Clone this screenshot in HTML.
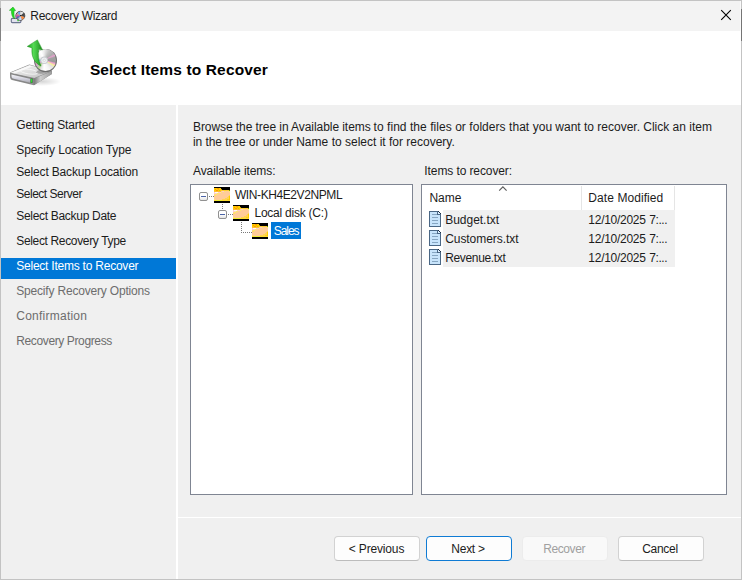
<!DOCTYPE html>
<html><head><meta charset="utf-8">
<style>
*{margin:0;padding:0;box-sizing:border-box}
html,body{width:742px;height:580px;overflow:hidden;background:#f0f0f0}
body{font-family:"Liberation Sans",sans-serif;font-size:12px;color:#000;position:relative}
.a{position:absolute}
.t{position:absolute;white-space:nowrap}
.panel{position:absolute;background:#fff;border:1px solid #7f8592}
.btn{position:absolute;top:536px;width:86px;height:25px;background:#fdfdfd;border:1px solid #d2d2d2;border-bottom-color:#bcbcbc;border-radius:4px}
.fi{position:absolute;left:429px;width:12px;height:16px}
.fo{position:absolute;width:16px;height:16px}
.xb{position:absolute;width:9px;height:9px;border:1px solid #919191;border-radius:2px;background:linear-gradient(#fff 0%,#fff 50%,#e4e4e4 100%)}
.xb i{position:absolute;left:1px;top:3px;width:5px;height:1px;background:#4b63a7}
</style></head><body>
<!-- window frame -->
<div class="a" style="left:0;top:0;width:742px;height:580px;background:#c3c3c3"></div>
<div class="a" style="left:741px;top:9px;width:1px;height:32px;background:#757575"></div>
<div class="a" style="left:0;top:8px;width:1px;height:33px;background:#838383"></div>
<div class="a" style="left:1px;top:1px;width:740px;height:30px;background:#f3f3f3"></div>
<div class="a" style="left:1px;top:31px;width:740px;height:74px;background:#fff"></div>
<div class="a" style="left:1px;top:105px;width:175px;height:474px;background:#f0f0f0"></div>
<div class="a" style="left:176px;top:105px;width:2px;height:474px;background:#fff"></div>
<div class="a" style="left:178px;top:105px;width:563px;height:474px;background:#f0f0f0"></div>
<div class="a" style="left:178px;top:517px;width:563px;height:1px;background:#fff"></div>

<div class="a" style="left:740px;top:1px;width:1px;height:30px;background:#fafafa"></div>
<!-- close X -->
<svg class="a" style="left:716px;top:5px" width="20" height="20" viewBox="0 0 20 20"><path d="M5.2 5.2 L14.8 14.8 M14.8 5.2 L5.2 14.8" stroke="#000" stroke-width="1.1" fill="none"/></svg>

<!--SMALLICON_S--><svg class="a" style="left:7px;top:5px" width="22" height="20" viewBox="7 5 22 20">
<defs><filter id="b2"><feGaussianBlur stdDeviation="0.32"/></filter></defs>
<g filter="url(#b2)">
 <rect x="11.3" y="18.4" width="9.6" height="4.2" rx="1" fill="#e2e2ee" stroke="#6c7490" stroke-width="1.1"/>
 <circle cx="20.3" cy="15.8" r="4.5" fill="#adadad" stroke="#484848" stroke-width="0.9"/>
 <path d="M20.3,15.8 L16,14 L16.2,17.4 Z" fill="#d85aa0"/>
 <path d="M20.3,15.8 L16.4,16.8 L17.6,18.8 Z" fill="#5060c0"/>
 <path d="M20.3,15.8 L17.8,12.6 L20,11.6 Z" fill="#6aa8f0"/>
 <path d="M20.3,15.8 L24.2,12.8 L24.9,17 Z" fill="#484848"/>
 <path d="M20.3,15.8 L24.6,17.2 L22.3,19.8 Z" fill="#ff8a40"/>
 <path d="M20.3,15.8 L21.6,20 L19,20 Z" fill="#c4dcff"/>
 <path d="M20.3,15.8 L20.4,11.4 L23.6,12.4 Z" fill="#e4e4e4"/>
 <circle cx="20.5" cy="15.6" r="0.6" fill="#111"/>
 <path d="M13,7.1 L9.4,10.3 L11.5,10.5 C11.3,14 12,17 14.5,19 C14,16 13.9,13 14.1,10.7 L15.6,10.5 Z" fill="#22e022" stroke="#1a9a1a" stroke-width="0.5" stroke-linejoin="round"/>
 <rect x="17.4" y="19.9" width="1.3" height="1.3" fill="#20c020"/>
</g>
</svg>
<!--SMALLICON_E-->
<!--BIGICON_S--><svg class="a" style="left:0;top:31px" width="80" height="74" viewBox="0 31 80 74">
<defs>
 <linearGradient id="hdTop" x1="0" y1="0" x2="1" y2="1"><stop offset="0" stop-color="#f6f6f6"/><stop offset="0.5" stop-color="#dedede"/><stop offset="1" stop-color="#bcbcbc"/></linearGradient>
 <linearGradient id="hdFront" x1="0" y1="0" x2="0" y2="1"><stop offset="0" stop-color="#f4f4f8"/><stop offset="0.5" stop-color="#d0d0dc"/><stop offset="1" stop-color="#a2a2a8"/></linearGradient>
 <linearGradient id="hdSide" x1="0" y1="0" x2="1" y2="0"><stop offset="0" stop-color="#777"/><stop offset="0.35" stop-color="#cfcfcf"/><stop offset="1" stop-color="#9c9c9c"/></linearGradient>
 <radialGradient id="shad" cx="0.5" cy="0.5" r="0.5"><stop offset="0" stop-color="#000" stop-opacity="0.16"/><stop offset="1" stop-color="#000" stop-opacity="0"/></radialGradient>
 <linearGradient id="arG" x1="0" y1="0" x2="1" y2="0"><stop offset="0" stop-color="#1f9a1f"/><stop offset="0.4" stop-color="#55dc55"/><stop offset="1" stop-color="#1c8a1c"/></linearGradient>
 <filter id="b1"><feGaussianBlur stdDeviation="0.35"/></filter>
</defs>
<ellipse cx="42" cy="81.5" rx="19" ry="4.5" fill="url(#shad)"/>
<g filter="url(#b1)">
 <path d="M10,73.4 Q9.7,72.5 11,72 L29.3,64.5 L52,70.6 L52,74 L34,85.3 L12,80 Q10.3,79.4 10.2,77.4 Z" fill="#8d8d8d"/>
 <path d="M10.4,72.7 L29.5,64.9 L51.6,70.8 L34.4,77.9 Z" fill="url(#hdTop)"/>
 <path d="M11.4,72.7 L29.5,65.4 L33,66.3 L14.5,73.6 Z" fill="#fff" opacity="0.7"/>
 <ellipse cx="29" cy="71.6" rx="9" ry="2.3" fill="none" stroke="#fff" stroke-width="0.9" opacity="0.7" transform="rotate(8 29 71.6)"/>
 <ellipse cx="43.5" cy="71.3" rx="7.5" ry="2.2" fill="#555" opacity="0.4" transform="rotate(-8 43.5 71.3)"/>
 <path d="M10.4,73.3 L34.2,78.6 L34,84.6 L12.2,79.4 Q10.8,78.8 10.6,77.2 Z" fill="#868686"/>
 <path d="M11.4,74.6 L33,79.5 L32.9,83.4 L12.9,78.6 Q11.7,78.2 11.6,77 Z" fill="url(#hdFront)"/>
 <path d="M34.3,78.6 L51.8,71.2 L51.8,74 L34.1,84.9 Z" fill="url(#hdSide)"/>
 <rect x="30.5" y="78.6" width="2.1" height="4.3" fill="#1a5a1a"/>
 <rect x="30.9" y="78.9" width="1.2" height="3.7" fill="#2fe02f"/>
</g>
</svg>
<div class="a" style="left:34.1px;top:48.9px;width:22.8px;height:22.8px;border-radius:50%;background:#6e6e6e;filter:blur(0.35px)"></div>
<div class="a" style="left:34.9px;top:49.3px;width:21.6px;height:21.6px;border-radius:50%;filter:blur(0.35px);background:conic-gradient(from 0deg at 43% 50%,#ececec 0deg,#c0c0c0 30deg,#acacac 55deg,#e4a0cc 67deg,#a2a2a2 76deg,#9a9a9a 100deg,#f2a0d2 108deg,#f6f29a 119deg,#e2e2e2 130deg,#f4f4f4 150deg,#fff 180deg,#e2e2e2 200deg,#b4d88c 214deg,#c2c2c2 226deg,#ea90c8 244deg,#d2d2d2 255deg,#3cc8f2 268deg,#dadada 281deg,#f4f4f4 310deg,#fff 340deg,#ececec 360deg)"></div>
<svg class="a" style="left:0;top:31px" width="80" height="74" viewBox="0 31 80 74">
<g filter="url(#b1)">
 <circle cx="44.2" cy="60.3" r="3.8" fill="#c4c8cc"/>
 <circle cx="44.2" cy="60.3" r="2.9" fill="#eceef0"/>
 <circle cx="44.2" cy="60.3" r="1.1" fill="#fdfdfd" stroke="#b8b8b8" stroke-width="0.4"/>
 <path d="M37.4,39.9 L27.3,46.4 L32,47.9 C31.2,56 33.8,62.4 41,66.1 C38.4,60.4 37.6,55 38.8,49.3 L42.5,49.9 Z" fill="url(#arG)" stroke="#1d8f1d" stroke-width="0.5" stroke-linejoin="round"/>
</g>
</svg>
<!--BIGICON_E-->

<!-- nav selection -->
<div class="a" style="left:1px;top:258px;width:175px;height:21px;background:#0078d7"></div>

<!-- panels -->
<div class="panel" style="left:190px;top:184px;width:223px;height:311px"></div>
<div class="panel" style="left:421px;top:184px;width:306px;height:311px"></div>

<!-- tree -->
<div class="xb" style="left:199px;top:192px"><i></i></div>
<div class="xb" style="left:218px;top:210px"><i></i></div>
<svg class="a" style="left:190px;top:184px" width="100" height="60" viewBox="0 0 100 60" shape-rendering="crispEdges">
 <g fill="#7a7a7a">
  <rect x="19" y="12" width="1" height="1"/><rect x="21" y="12" width="1" height="1"/><rect x="23" y="12" width="1" height="1"/>
  <rect x="32" y="20" width="1" height="1"/><rect x="32" y="22" width="1" height="1"/><rect x="32" y="24" width="1" height="1"/>
  <rect x="38" y="30" width="1" height="1"/><rect x="40" y="30" width="1" height="1"/><rect x="42" y="30" width="1" height="1"/>
  <rect x="51" y="38" width="1" height="1"/><rect x="51" y="40" width="1" height="1"/><rect x="51" y="42" width="1" height="1"/><rect x="51" y="44" width="1" height="1"/><rect x="51" y="46" width="1" height="1"/><rect x="51" y="48" width="1" height="1"/>
  <rect x="53" y="48" width="1" height="1"/><rect x="55" y="48" width="1" height="1"/><rect x="57" y="48" width="1" height="1"/><rect x="59" y="48" width="1" height="1"/><rect x="61" y="48" width="1" height="1"/>
 </g>
</svg>
<svg width="0" height="0" style="position:absolute"><defs>
 <g id="fold" shape-rendering="crispEdges">
  <rect width="16" height="16" fill="#000"/>
  <rect x="0" y="1" width="7" height="3" fill="#ffcc00"/>
  <rect x="1" y="2" width="1" height="1" fill="#ff9900"/><rect x="3" y="1" width="2" height="1" fill="#ff9900"/><rect x="4" y="2" width="1" height="1" fill="#ffaa00"/><rect x="2" y="3" width="2" height="1" fill="#ff9900"/><rect x="5" y="3" width="1" height="1" fill="#cccc00"/>
  <rect x="7" y="2" width="1" height="1" fill="#cc9900"/>
  <rect x="7" y="3" width="8" height="1" fill="#ffcc33"/><rect x="15" y="3" width="1" height="1" fill="#669900"/>
  <rect x="0" y="4" width="16" height="10" fill="#ffcc99"/>
  <rect x="0" y="4" width="7" height="1" fill="#ffbb33"/><rect x="8" y="4" width="2" height="1" fill="#ffcccc"/><rect x="10" y="4" width="1" height="1" fill="#ffee66"/><rect x="15" y="4" width="1" height="1" fill="#ffee66"/>
  <rect x="0" y="5" width="1" height="2" fill="#ffcccc"/><rect x="1" y="5" width="3" height="1" fill="#ffffee"/><rect x="4" y="5" width="3" height="1" fill="#ffcccc"/><rect x="7" y="5" width="1" height="1" fill="#ffee66"/>
  <rect x="1" y="6" width="2" height="1" fill="#ffcccc"/><rect x="3" y="6" width="2" height="1" fill="#ffee66"/>
  <rect x="1" y="7" width="2" height="1" fill="#ffee66"/><rect x="0" y="8" width="2" height="1" fill="#ffdd66"/>
  <polygon points="16,8 16,13 7,13 9,12 12,11 14,9" fill="#ffd451"/>
  <rect x="15" y="9" width="1" height="4" fill="#ffcc00"/><rect x="13" y="12" width="2" height="1" fill="#ffcc22"/>
  <rect x="0" y="12" width="1" height="1" fill="#ffee66"/>
  <rect x="0" y="13" width="16" height="1" fill="#ffdd33"/><rect x="2" y="13" width="6" height="1" fill="#eeee33"/>
  <rect x="0" y="14" width="16" height="2" fill="#000"/>
 </g>
 <g id="file" shape-rendering="crispEdges">
  <rect x="0" y="0" width="12" height="16" fill="#c8e4fb"/>
  <rect x="9" y="0" width="3" height="1" fill="#fff"/><rect x="10" y="1" width="2" height="1" fill="#fff"/><rect x="11" y="2" width="1" height="1" fill="#fff"/>
  <g fill="#4a6785"><rect x="0" y="0" width="1" height="16"/><rect x="0" y="0" width="9" height="1"/><rect x="0" y="15" width="12" height="1"/><rect x="11" y="3" width="1" height="13"/>
  <rect x="8" y="1" width="1" height="3"/><rect x="8" y="3" width="3" height="1"/></g>
  <g fill="#1d2f45"><rect x="9" y="0" width="1" height="1"/><rect x="10" y="1" width="1" height="1"/><rect x="11" y="2" width="1" height="1"/></g>
  <rect x="9" y="1" width="1" height="2" fill="#dcefff"/><rect x="10" y="2" width="1" height="1" fill="#dcefff"/>
  <g fill="#86a6c2"><rect x="3" y="3" width="5" height="1"/><rect x="3" y="6" width="6" height="1"/><rect x="3" y="9" width="6" height="1"/><rect x="3" y="12" width="6" height="1"/></g>
 </g>
</defs></svg>
<svg class="fo" style="left:214px;top:187px" viewBox="0 0 16 16"><use href="#fold"/></svg>
<svg class="fo" style="left:233px;top:205px" viewBox="0 0 16 16"><use href="#fold"/></svg>
<svg class="fo" style="left:252px;top:223px" viewBox="0 0 16 16"><use href="#fold"/></svg>
<div class="a" style="left:271px;top:222px;width:30px;height:17px;background:#0078d7"></div>

<!-- list -->
<div class="a" style="left:581px;top:186px;width:1px;height:24px;background:#e5e5e5"></div>
<div class="a" style="left:674px;top:186px;width:1px;height:24px;background:#e5e5e5"></div>
<svg class="a" style="left:498px;top:185px" width="10" height="7" viewBox="0 0 10 7"><path d="M1.2 5.6 L4.9 1.9 L8.6 5.6" stroke="#5c5c5c" stroke-width="1.15" fill="none"/></svg>
<div class="a" style="left:443px;top:210px;width:232px;height:57px;background:#f0f0f0"></div>
<svg class="fi" style="top:211px" viewBox="0 0 12 16"><use href="#file"/></svg>
<svg class="fi" style="top:230px" viewBox="0 0 12 16"><use href="#file"/></svg>
<svg class="fi" style="top:249px" viewBox="0 0 12 16"><use href="#file"/></svg>

<!-- buttons -->
<div class="btn" style="left:334px"></div>
<div class="btn" style="left:426px;border-color:#0f7bd4"></div>
<div class="btn" style="left:522px;background:#f9f9f9;border-color:#ececec"></div>
<div class="btn" style="left:618px"></div>

<div class="t" style="left:30.36px;top:8.84px;font-size:12px;line-height:14px;letter-spacing:-0.303px;color:#1c1c1c">Recovery Wizard</div>
<div class="t" style="left:89.89px;top:60.63px;font-size:15.5px;line-height:18px;letter-spacing:0.138px;color:#000;font-weight:bold">Select Items to Recover</div>
<div class="t" style="left:16.26px;top:117.84px;font-size:12px;line-height:14px;letter-spacing:-0.143px;color:#1c1c1c">Getting Started</div>
<div class="t" style="left:16.26px;top:142.84px;font-size:12px;line-height:14px;letter-spacing:-0.098px;color:#1c1c1c">Specify Location Type</div>
<div class="t" style="left:16.26px;top:164.84px;font-size:12px;line-height:14px;letter-spacing:-0.172px;color:#1c1c1c">Select Backup Location</div>
<div class="t" style="left:16.26px;top:186.84px;font-size:12px;line-height:14px;letter-spacing:-0.484px;color:#1c1c1c">Select Server</div>
<div class="t" style="left:16.26px;top:208.84px;font-size:12px;line-height:14px;letter-spacing:-0.305px;color:#1c1c1c">Select Backup Date</div>
<div class="t" style="left:16.26px;top:233.84px;font-size:12px;line-height:14px;letter-spacing:-0.342px;color:#1c1c1c">Select Recovery Type</div>
<div class="t" style="left:16.26px;top:258.84px;font-size:12px;line-height:14px;letter-spacing:-0.230px;color:#fff">Select Items to Recover</div>
<div class="t" style="left:16.26px;top:283.84px;font-size:12px;line-height:14px;letter-spacing:-0.184px;color:#6d6d6d">Specify Recovery Options</div>
<div class="t" style="left:16.26px;top:308.84px;font-size:12px;line-height:14px;letter-spacing:0.244px;color:#6d6d6d">Confirmation</div>
<div class="t" style="left:16.26px;top:333.84px;font-size:12px;line-height:14px;letter-spacing:-0.377px;color:#6d6d6d">Recovery Progress</div>
<div class="t" style="left:192.96px;top:119.84px;font-size:12px;line-height:14px;letter-spacing:-0.065px;color:#1c1c1c">Browse the tree in Available items</div>
<div class="t" style="left:373.56px;top:119.84px;font-size:12px;line-height:14px;letter-spacing:0.049px;color:#1c1c1c">to find the files or folders that you</div>
<div class="t" style="left:555.36px;top:119.84px;font-size:12px;line-height:14px;letter-spacing:-0.007px;color:#1c1c1c">want to recover. Click an item</div>
<div class="t" style="left:192.96px;top:134.84px;font-size:12px;line-height:14px;letter-spacing:-0.068px;color:#1c1c1c">in the tree or under Name</div>
<div class="t" style="left:331.66px;top:134.84px;font-size:12px;line-height:14px;letter-spacing:-0.001px;color:#1c1c1c">to select it for recovery.</div>
<div class="t" style="left:192.96px;top:163.84px;font-size:12px;line-height:14px;letter-spacing:-0.087px;color:#1c1c1c">Available items:</div>
<div class="t" style="left:424.36px;top:163.84px;font-size:12px;line-height:14px;letter-spacing:-0.103px;color:#1c1c1c">Items to recover:</div>
<div class="t" style="left:234.96px;top:187.84px;font-size:12px;line-height:14px;letter-spacing:-0.411px;color:#1c1c1c">WIN-KH4E2V2NPML</div>
<div class="t" style="left:254.46px;top:205.84px;font-size:12px;line-height:14px;letter-spacing:-0.233px;color:#1c1c1c">Local disk (C:)</div>
<div class="t" style="left:273.86px;top:223.84px;font-size:12px;line-height:14px;letter-spacing:-1.103px;color:#fff">Sales</div>
<div class="t" style="left:429.46px;top:190.84px;font-size:12px;line-height:14px;letter-spacing:0.001px;color:#1c1c1c">Name</div>
<div class="t" style="left:588.36px;top:190.84px;font-size:12px;line-height:14px;letter-spacing:0.073px;color:#1c1c1c">Date Modified</div>
<div class="t" style="left:445.16px;top:212.84px;font-size:12px;line-height:14px;letter-spacing:-0.014px;color:#1c1c1c">Budget.txt</div>
<div class="t" style="left:445.16px;top:231.84px;font-size:12px;line-height:14px;letter-spacing:-0.058px;color:#1c1c1c">Customers.txt</div>
<div class="t" style="left:445.16px;top:250.84px;font-size:12px;line-height:14px;letter-spacing:-0.333px;color:#1c1c1c">Revenue.txt</div>
<div class="t" style="left:588.36px;top:212.84px;font-size:12px;line-height:14px;letter-spacing:-0.283px;color:#1c1c1c">12/10/2025</div>
<div class="t" style="left:649.36px;top:212.84px;font-size:12px;line-height:14px;letter-spacing:-0.474px;color:#1c1c1c">7:...</div>
<div class="t" style="left:588.36px;top:231.84px;font-size:12px;line-height:14px;letter-spacing:-0.283px;color:#1c1c1c">12/10/2025</div>
<div class="t" style="left:649.36px;top:231.84px;font-size:12px;line-height:14px;letter-spacing:-0.474px;color:#1c1c1c">7:...</div>
<div class="t" style="left:588.36px;top:250.84px;font-size:12px;line-height:14px;letter-spacing:-0.283px;color:#1c1c1c">12/10/2025</div>
<div class="t" style="left:649.36px;top:250.84px;font-size:12px;line-height:14px;letter-spacing:-0.474px;color:#1c1c1c">7:...</div>
<div class="t" style="left:348.86px;top:541.84px;font-size:12px;line-height:14px;letter-spacing:-0.168px;color:#1c1c1c">&lt; Previous</div>
<div class="t" style="left:451.36px;top:541.84px;font-size:12px;line-height:14px;letter-spacing:-0.279px;color:#1c1c1c">Next &gt;</div>
<div class="t" style="left:543.26px;top:541.84px;font-size:12px;line-height:14px;letter-spacing:-0.411px;color:#a0a0a0">Recover</div>
<div class="t" style="left:642.16px;top:541.84px;font-size:12px;line-height:14px;letter-spacing:-0.268px;color:#1c1c1c">Cancel</div>
</body></html>
